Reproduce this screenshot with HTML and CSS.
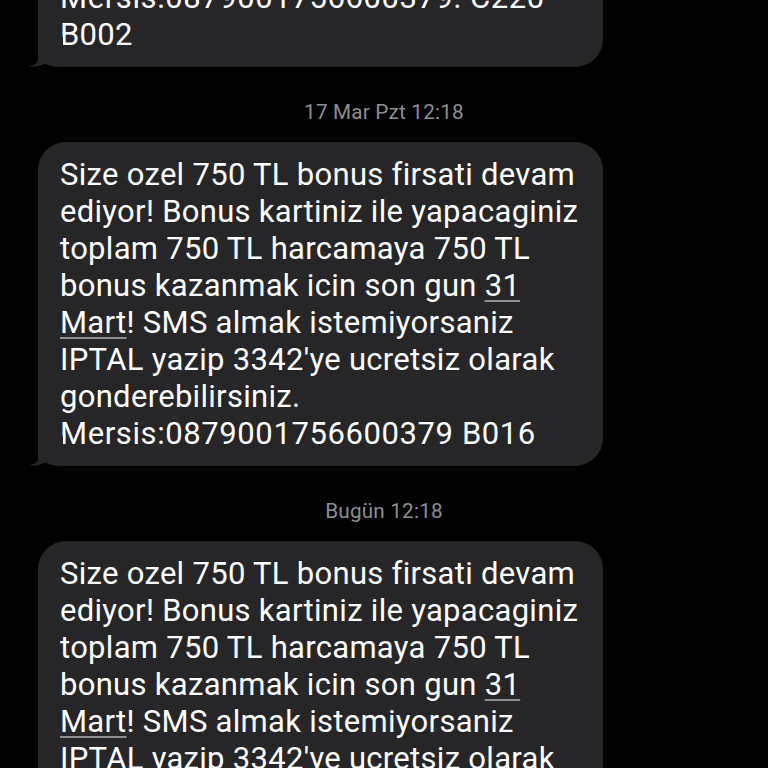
FILE: index.html
```html
<!DOCTYPE html>
<html lang="tr">
<head>
<meta charset="utf-8">
<link rel="stylesheet" href="styles.css">
</head>
<body>
<main class="thread">
  <div class="msg">
    <div class="bubble">
      <span class="line wide">Mersis:0879001756600379: C220</span>
      <span class="line">B002</span>
      <svg class="tail" viewBox="0 0 36 30" width="36" height="30" aria-hidden="true"><path d="M11 0 L11 22 C11 26 7 28.5 1 29.7 C8 30.2 14 28.6 18 26.5 C22 28.8 27 30 36 30 L36 0 Z"/></svg>
    </div>
  </div>
  <div class="stamp">17 Mar Pzt 12:18</div>
  <div class="msg">
    <div class="bubble">
      <span class="line">Size ozel 750 TL bonus firsati devam</span>
      <span class="line">ediyor! Bonus kartiniz ile yapacaginiz</span>
      <span class="line">toplam 750 TL harcamaya 750 TL</span>
      <span class="line">bonus kazanmak icin son gun <span class="link">31</span></span>
      <span class="line"><span class="link">Mart</span>! SMS almak istemiyorsaniz</span>
      <span class="line">IPTAL yazip 3342'ye ucretsiz olarak</span>
      <span class="line">gonderebilirsiniz.</span>
      <span class="line wide">Mersis:0879001756600379 B016</span>
      <svg class="tail" viewBox="0 0 36 30" width="36" height="30" aria-hidden="true"><path d="M11 0 L11 22 C11 26 7 28.5 1 29.7 C8 30.2 14 28.6 18 26.5 C22 28.8 27 30 36 30 L36 0 Z"/></svg>
    </div>
  </div>
  <div class="stamp">Bugün 12:18</div>
  <div class="msg">
    <div class="bubble">
      <span class="line">Size ozel 750 TL bonus firsati devam</span>
      <span class="line">ediyor! Bonus kartiniz ile yapacaginiz</span>
      <span class="line">toplam 750 TL harcamaya 750 TL</span>
      <span class="line">bonus kazanmak icin son gun <span class="link">31</span></span>
      <span class="line"><span class="link">Mart</span>! SMS almak istemiyorsaniz</span>
      <span class="line">IPTAL yazip 3342'ye ucretsiz olarak</span>
      <span class="line">gonderebilirsiniz.</span>
      <span class="line wide">Mersis:0879001756600379 B016</span>
      <svg class="tail" viewBox="0 0 36 30" width="36" height="30" aria-hidden="true"><path d="M11 0 L11 22 C11 26 7 28.5 1 29.7 C8 30.2 14 28.6 18 26.5 C22 28.8 27 30 36 30 L36 0 Z"/></svg>
    </div>
  </div>
</main>
</body>
</html>
```
FILE: styles.css
```css
html, body {
  margin: 0;
  padding: 0;
  background: #000;
  height: 768px;
  overflow: hidden;
}
body {
  font-family: Roboto, "Noto Sans", sans-serif;
  color: #fff;
}
.thread {
  display: flex;
  flex-direction: column;
  margin-top: -35px;
}
.msg {
  display: flex;
  padding-left: 38px;
}
.bubble {
  position: relative;
  box-sizing: border-box;
  width: 565px;
  padding: 14px 20px 14px 22px;
  background: #262628;
  border-radius: 28px;
  font-size: 31px;
  line-height: 37px;
  letter-spacing: 0.3px;
  display: flex;
  flex-direction: column;
}
.line {
  display: block;
  white-space: nowrap;
}
.wide {
  letter-spacing: 0.6px;
}
.link {
  text-decoration: underline;
  text-decoration-color: #8e8e93;
  text-decoration-thickness: 1.5px;
  text-underline-offset: 4px;
}
.tail {
  position: absolute;
  left: -11px;
  bottom: 0;
  fill: #262628;
}
.stamp {
  margin: 33px 0 18px;
  text-align: center;
  font-size: 20.7px;
  font-weight: 400;
  line-height: 24px;
  color: #8e8e93;
  letter-spacing: 0.2px;
}
```
